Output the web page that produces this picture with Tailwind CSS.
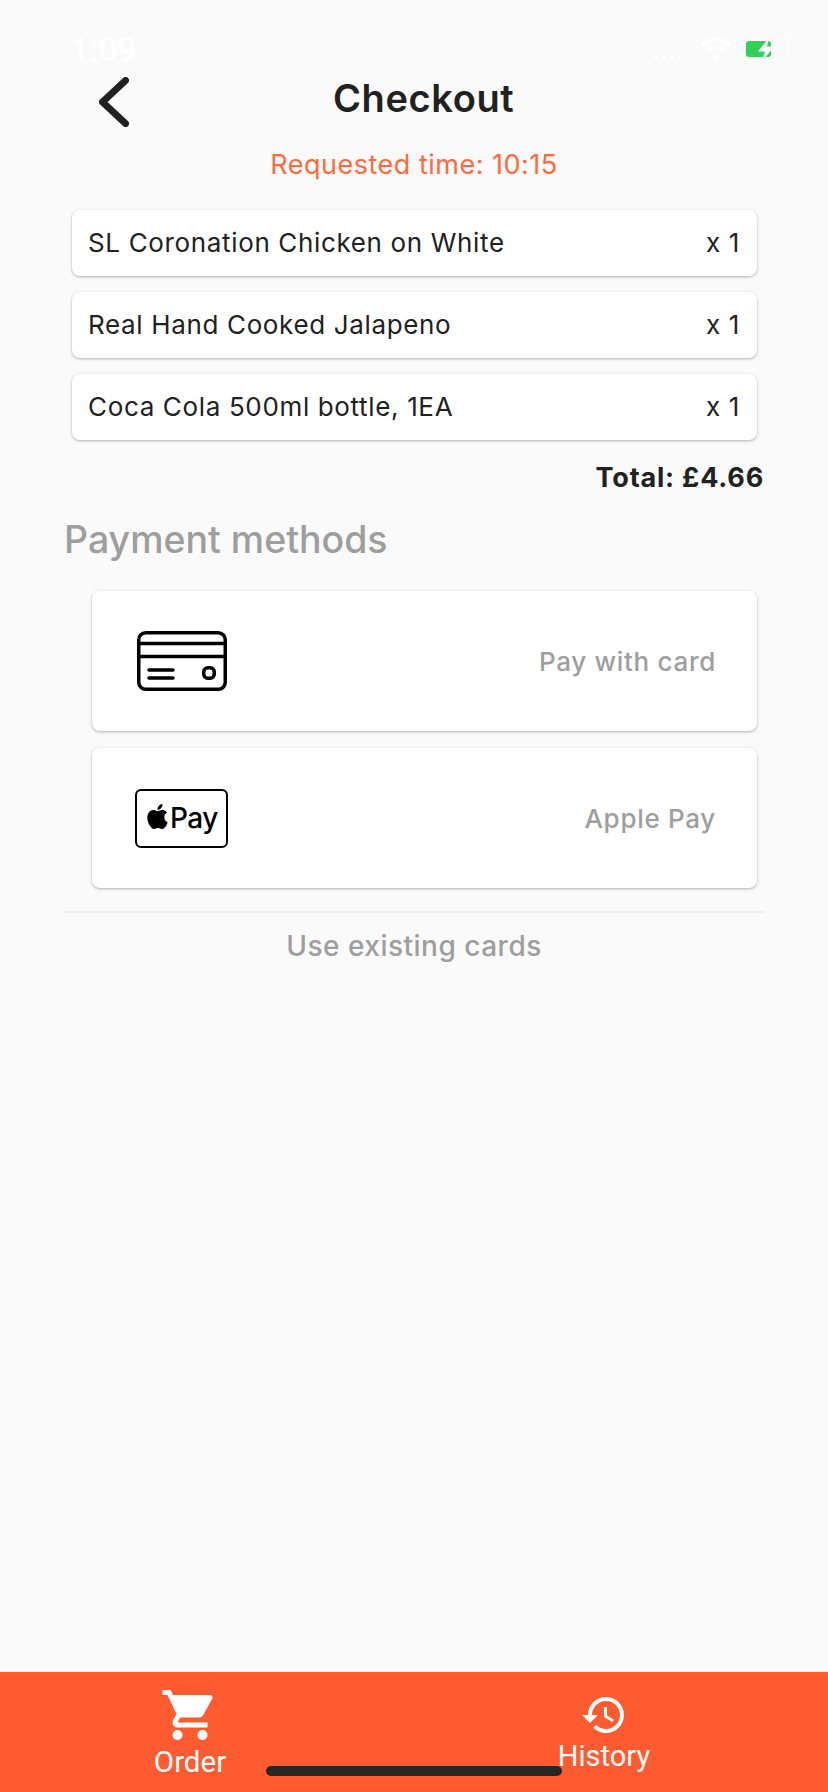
<!DOCTYPE html>
<html lang="en">
  <head>
    <meta charset="UTF-8" />
    <meta name="viewport" content="width=device-width, initial-scale=1.0" />
    <title>Checkout</title>
    <script src="https://cdn.jsdelivr.net/npm/@tailwindcss/browser@4"></script>
  </head>

  <body class="bg-[#fafafa] font-['Inter','Liberation_Sans',sans-serif]">
    <div class="relative w-[828px] h-[1792px] flex flex-col overflow-hidden">
      <!-- status bar, white on a light page -->
      <div class="h-[72px] flex items-start justify-between pl-[70px] pr-[39px] pt-[30px] text-white">
        <span class="text-[34px] leading-[38px] font-medium font-['Roboto',sans-serif]">1:09</span>
        <div class="flex items-start gap-[10px] pt-[7px]">
          <div class="flex items-center gap-[3px] h-[24px] pt-[14px] mr-[8px]">
            <div class="w-[5px] h-[5px] rounded-full bg-white"></div>
            <div class="w-[5px] h-[5px] rounded-full bg-white"></div>
            <div class="w-[5px] h-[5px] rounded-full bg-white"></div>
            <div class="w-[5px] h-[5px] rounded-full bg-white"></div>
          </div>
          <svg class="w-[32px] h-[24px]" viewBox="0 0 32 24" fill="none" stroke="#ffffff" stroke-width="4">
            <path d="M2 8 C10 0 22 0 30 8" />
            <path d="M8 14 C12 10 20 10 24 14" />
            <path d="M16 23 L12 19 C14 17 18 17 20 19 Z" fill="#ffffff" stroke-width="1" />
          </svg>
          <div class="relative w-[47px] h-[24px] rounded-[6px] border border-white/80 p-[3px]">
            <div class="w-[25px] h-full rounded-[3px] bg-[#30d158]"></div>
            <svg class="absolute left-[13px] -top-[1px] w-[20px] h-[25px]" viewBox="0 0 20 24" fill="#ffffff">
              <path d="M13 0 L2 14 H9 L6 24 L18 9 H11 Z" />
            </svg>
          </div>
        </div>
      </div>

      <!-- header -->
      <div class="h-[60px] flex items-center pl-[99px]">
        <svg class="w-[30px] h-[50px]" viewBox="0 0 30 50" fill="none" stroke="#212121" stroke-width="7" stroke-linecap="round" stroke-linejoin="round">
          <path d="M26.5 3.5 L3.5 25 L26.5 46.500" />
        </svg>
        <h1 class="ml-[204px] -mt-[9px] text-[38px] leading-[60px] font-semibold tracking-[0.6px] text-[#212121]">Checkout</h1>
      </div>

      <main class="flex-1 flex flex-col px-[64px]">
        <p class="mt-[17px] h-[61px] text-center text-[27px] leading-[32px] tracking-[0.5px] text-[#ff6a3d]">Requested time: 10:15</p>

        <div class="flex flex-col gap-[16px] ml-[8px] mr-[7px]">
          <div class="h-[66px] flex items-center justify-between pl-[16px] pr-[17px] pb-[2px] bg-white rounded-[8px] shadow-[0_1px_3px_rgba(0,0,0,0.3)] text-[26px] tracking-[0.65px] text-[#212121]">
            <span>SL Coronation Chicken on White</span><span>x 1</span>
          </div>
          <div class="h-[66px] flex items-center justify-between pl-[16px] pr-[17px] pb-[2px] bg-white rounded-[8px] shadow-[0_1px_3px_rgba(0,0,0,0.3)] text-[26px] tracking-[0.65px] text-[#212121]">
            <span>Real Hand Cooked Jalapeno</span><span>x 1</span>
          </div>
          <div class="h-[66px] flex items-center justify-between pl-[16px] pr-[17px] pb-[2px] bg-white rounded-[8px] shadow-[0_1px_3px_rgba(0,0,0,0.3)] text-[26px] tracking-[0.65px] text-[#212121]">
            <span>Coca Cola 500ml bottle, 1EA</span><span>x 1</span>
          </div>
        </div>

        <p class="mt-[22px] text-right text-[27px] leading-[32px] font-bold tracking-[0.8px] text-[#212121]">Total: £4.66</p>
        <h2 class="mt-[24px] text-[37.5px] leading-[44px] font-medium text-[#9e9e9e]">Payment methods</h2>

        <div class="mt-[29px] ml-[28px] mr-[7px] flex flex-col gap-[17px]">
          <div class="h-[140px] flex items-center justify-between pl-[45px] pr-[41px] bg-white rounded-[8px] shadow-[0_1px_3px_rgba(0,0,0,0.3)]">
            <svg class="w-[90px] h-[60px]" viewBox="0 0 90 60" fill="none" stroke="#000000" stroke-width="3.500" stroke-linecap="round">
              <rect x="1.750" y="1.750" width="86.500" height="56.500" rx="7" />
              <path d="M2 12.500 H88 M2 25.500 H88 M12 39 H36 M12 47 H36" />
              <rect x="66.750" y="36.750" width="10.500" height="10.500" rx="4" />
            </svg>
            <span class="text-[26px] font-medium tracking-[0.7px] text-[#9e9e9e]">Pay with card</span>
          </div>
          <div class="h-[140px] flex items-center justify-between pl-[43px] pr-[41px] bg-white rounded-[8px] shadow-[0_1px_3px_rgba(0,0,0,0.3)]">
            <div class="w-[93px] h-[59px] flex items-center justify-center border-2 border-black rounded-[6px] text-black">
              <svg class="w-[25px] h-[27px] -mt-[3px]" viewBox="0 0 24 24" fill="#000000">
                <path d="M12.152 6.896c-.948 0-2.415-1.078-3.96-1.04-2.04.027-3.91 1.183-4.961 3.014-2.117 3.675-.546 9.103 1.519 12.09 1.013 1.454 2.208 3.09 3.792 3.039 1.52-.065 2.09-.987 3.935-.987 1.831 0 2.35.987 3.96.948 1.637-.026 2.676-1.48 3.676-2.948 1.156-1.688 1.636-3.325 1.662-3.415-.039-.013-3.182-1.221-3.22-4.857-.026-3.04 2.48-4.494 2.597-4.559-1.429-2.09-3.623-2.324-4.39-2.376-2-.156-3.675 1.09-4.61 1.09zM15.53 3.83c.843-1.012 1.4-2.427 1.245-3.83-1.207.052-2.662.805-3.532 1.818-.78.896-1.454 2.338-1.273 3.714 1.338.104 2.715-.688 3.559-1.701" />
              </svg>
              <span class="text-[28px] leading-[32px] font-medium tracking-[-0.5px]">Pay</span>
            </div>
            <span class="text-[26px] font-medium tracking-[0.7px] text-[#9e9e9e]">Apple Pay</span>
          </div>
        </div>

        <div class="mt-[23px] mr-[-1px] border-t-2 border-[#eeeeee]"></div>
        <p class="mt-[17px] text-center text-[28px] leading-[32px] font-medium tracking-[0.5px] text-[#9e9e9e]">Use existing cards</p>
      </main>

      <!-- bottom nav -->
      <nav class="h-[120px] grid grid-cols-[380px_448px] bg-[#ff5b30] text-white font-['Roboto',sans-serif]">
        <div class="flex flex-col items-center pt-[13px]">
          <svg class="w-[60px] h-[60px]" viewBox="0 0 24 24" fill="#ffffff">
            <path d="M7 18c-1.1 0-1.99.9-1.99 2S5.9 22 7 22s2-.9 2-2-.9-2-2-2zM1 2v2h2l3.6 7.59-1.35 2.45c-.16.28-.25.61-.25.96 0 1.1.9 2 2 2h12v-2H7.42c-.14 0-.25-.11-.25-.25l.03-.12.9-1.63h7.45c.75 0 1.41-.41 1.75-1.03l3.58-6.49c.08-.14.12-.31.12-.48 0-.55-.45-1-1-1H5.21l-.94-2H1zm16 16c-1.1 0-1.99.9-1.99 2s.89 2 1.99 2 2-.9 2-2-.9-2-2-2z" />
          </svg>
          <span class="mt-[1px] text-[29.5px] leading-[32px]">Order</span>
        </div>
        <div class="flex flex-col items-center pt-[19px]">
          <svg class="w-[48px] h-[48px]" viewBox="0 0 24 24" fill="#ffffff">
            <path d="M13 3c-4.97 0-9 4.030-9 9H1l3.890 3.890.07.14L9 12H6c0-3.870 3.130-7 7-7s7 3.130 7 7-3.130 7-7 7c-1.930 0-3.680-.79-4.940-2.060l-1.420 1.420C8.270 19.990 10.510 21 13 21c4.970 0 9-4.030 9-9s-4.030-9-9-9zm-1 5v5l4.280 2.540.72-1.210-3.500-2.080V8H12z" />
          </svg>
          <span class="mt-[1px] text-[29px] leading-[32px]">History</span>
        </div>
      </nav>

      <!-- home indicator -->
      <div class="absolute left-[266px] top-[1766px] w-[296px] h-[10px] rounded-full bg-[#262626]"></div>
    </div>
  </body>
</html>
